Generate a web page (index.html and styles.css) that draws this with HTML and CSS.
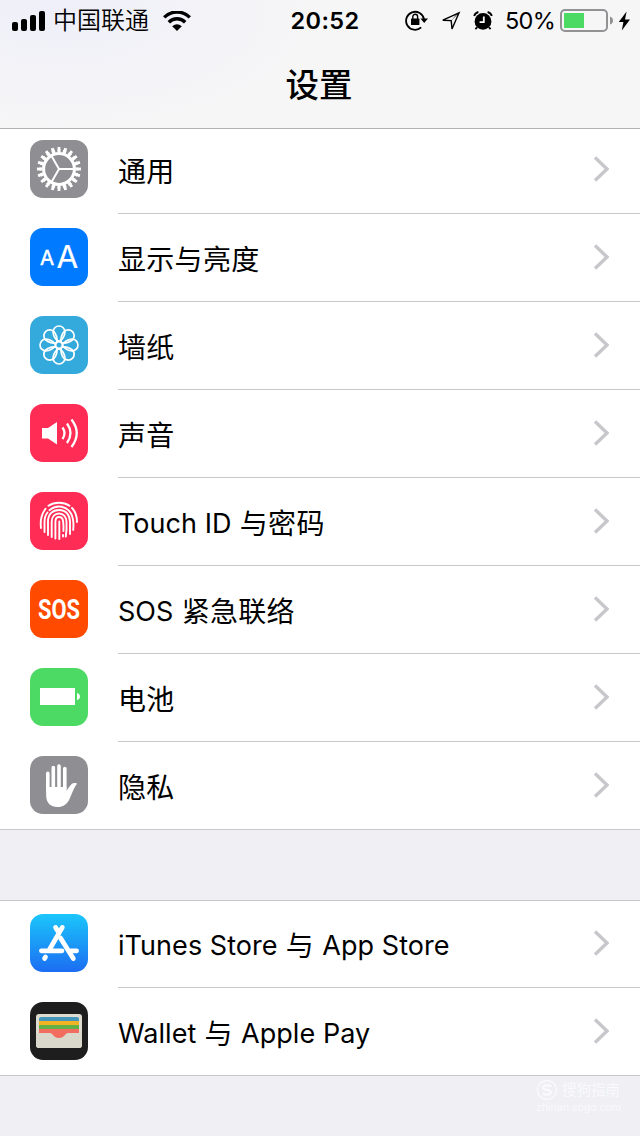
FILE: index.html
```html
<!DOCTYPE html>
<html lang="zh-CN">

<head>
    <meta charset="UTF-8">
    <title>设置</title>
    <link rel="stylesheet" href="styles.css">
</head>

<body>
    <header class="header">
        <div class="status-bar">
            <div class="status-left">
                <svg class="signal" width="34" height="20" viewBox="0 0 34 20">
                    <rect x="0" y="11" width="6" height="9" rx="2"/>
                    <rect x="9" y="8" width="6" height="12" rx="2"/>
                    <rect x="18" y="4" width="6" height="16" rx="2"/>
                    <rect x="27" y="0" width="6" height="20" rx="2"/>
                </svg>
                <span class="carrier">中国联通</span>
                <svg class="wifi" width="28" height="20" viewBox="0 0 28 20">
                    <path d="M1.2 6.4A18 18 0 0 1 26.8 6.4M5.8 11.2A11.6 11.6 0 0 1 22.2 11.2" fill="none" stroke="#000" stroke-width="3.4"/>
                    <path d="M9.2 15.2Q14 11.2 18.8 15.2L14 20Z"/>
                </svg>
            </div>
            <span class="time">20:52</span>
            <div class="status-right">
                <svg width="23" height="22" viewBox="0 0 23 22">
                    <path d="M16.2 17.4A9 9 0 1 1 19 9.4" fill="none" stroke="#000" stroke-width="1.8"/>
                    <path d="M15.4 8.6H23L19.2 13Z"/>
                    <rect x="6" y="8.6" width="8.4" height="6.4" rx="0.6"/>
                    <path d="M7.8 9.4V6.6a2.4 2.4 0 0 1 4.8 0V9.4" fill="none" stroke="#000" stroke-width="1.4"/>
                </svg>
                <svg class="location" width="20" height="20" viewBox="0 0 20 20">
                    <path d="M1.8 9.2L18 1.8L11 18L10.2 9.6Z" fill="none" stroke="#000" stroke-width="1.4"/>
                    <path d="M10 10L18 1.8L17 1.5Z"/>
                </svg>
                <svg class="alarm" width="20" height="20" viewBox="0 0 20 20">
                    <circle cx="10" cy="10.4" r="8.4"/>
                    <path d="M1.2 5Q2 1.8 5.4 1M14.6 1Q18 1.8 18.8 5M4 16.4L2.4 18.2M16 16.4L17.6 18.2" fill="none" stroke="#000" stroke-width="1.8"/>
                    <path d="M10.8 5.6V11.2H6.6" fill="none" stroke="#fff" stroke-width="1.8"/>
                </svg>
                <span class="percent">50%</span>
                <svg class="battery" width="53" height="23" viewBox="0 0 53 23">
                    <rect x="1" y="1" width="46" height="21" rx="4" fill="none" stroke="#929295" stroke-width="2"/>
                    <rect x="4" y="4" width="20" height="15" fill="#4cd964"/>
                    <path d="M50 7.5Q53 8.5 53 11.5T50 15.5Z" fill="#929295"/>
                </svg>
                <svg class="bolt" width="13" height="20" viewBox="0 0 13 20">
                    <path d="M8.6 0.5L0.8 11H5.4L3.8 19.5L12 8.6H7Z"/>
                </svg>
            </div>
        </div>
        <h1 class="title">设置</h1>
    </header>

    <ul class="group group-main">
        <li class="row">
            <svg class="icon" viewBox="0 0 58 58">
                <rect width="58" height="58" rx="13" fill="#8e8e93"/>
                <g fill="none" stroke="#fff">
                    <circle cx="29" cy="29" r="15.4" stroke-width="3"/>
                    <!-- teeth, wide at the root and narrow at the tip -->
                    <circle cx="29" cy="29" r="18" stroke-width="3.2" pathLength="200" stroke-dasharray="6 4" stroke-dashoffset="3"/>
                    <circle cx="29" cy="29" r="20.5" stroke-width="3" pathLength="200" stroke-dasharray="4.4 5.6" stroke-dashoffset="2.2"/>
                    <path d="M29 29H44M29 29L21.4 15.8M29 29L21.4 42.2" stroke-width="2"/>
                </g>
            </svg>
            <div class="cell">
                <span class="label">通用</span>
                <svg class="chevron" viewBox="0 0 16 26"><path d="M2 1.5L14 13L2 24.5"/></svg>
            </div>
        </li>
        <li class="row">
            <svg class="icon" viewBox="0 0 58 58">
                <rect width="58" height="58" rx="13" fill="#007aff"/>
                <text class="letter" x="10" y="37" font-size="20.5" stroke-width="0.5">A</text>
                <text class="letter" x="26.4" y="39.8" font-size="31.5" stroke-width="0.2">A</text>
            </svg>
            <div class="cell">
                <span class="label">显示与亮度</span>
                <svg class="chevron" viewBox="0 0 16 26"><path d="M2 1.5L14 13L2 24.5"/></svg>
            </div>
        </li>
        <li class="row">
            <svg class="icon" viewBox="0 0 58 58">
                <rect width="58" height="58" rx="13" fill="#34aadc"/>
                <g fill="none" stroke="#fff" stroke-width="1.7">
                    <circle cx="29" cy="29" r="3.4"/>
                    <path id="petal" d="M29 25.6C25.6 24 23.1 19.4 23.1 15.9A5.9 5.9 0 0 1 34.9 15.9C34.9 19.4 32.4 24 29 25.6Z"/>
                    <use href="#petal" transform="rotate(45 29 29)"/>
                    <use href="#petal" transform="rotate(90 29 29)"/>
                    <use href="#petal" transform="rotate(135 29 29)"/>
                    <use href="#petal" transform="rotate(180 29 29)"/>
                    <use href="#petal" transform="rotate(225 29 29)"/>
                    <use href="#petal" transform="rotate(270 29 29)"/>
                    <use href="#petal" transform="rotate(315 29 29)"/>
                </g>
            </svg>
            <div class="cell">
                <span class="label">墙纸</span>
                <svg class="chevron" viewBox="0 0 16 26"><path d="M2 1.5L14 13L2 24.5"/></svg>
            </div>
        </li>
        <li class="row">
            <svg class="icon" viewBox="0 0 58 58">
                <rect width="58" height="58" rx="13" fill="#ff2d55"/>
                <path d="M12 24H18L27 18V40.5L18 34.5H12Z" fill="#fff"/>
                <path d="M32.5 23.5Q36.5 29 32.5 35M37 19.5Q44 29 37 39M41.5 15.5Q52 29 41.5 43" fill="none" stroke="#fff" stroke-width="2.3"/>
            </svg>
            <div class="cell">
                <span class="label">声音</span>
                <svg class="chevron" viewBox="0 0 16 26"><path d="M2 1.5L14 13L2 24.5"/></svg>
            </div>
        </li>
        <li class="row">
            <svg class="icon" viewBox="0 0 58 58">
                <rect width="58" height="58" rx="13" fill="#ff2d55"/>
                <g fill="none" stroke="#fff" stroke-width="1.9" stroke-linecap="round">
                    <path d="M18.5 13.8Q23 10.8 29 10.8Q35 10.8 39.5 13.8M42 16Q47 21 47 30M11 36Q9.5 25 15.5 16.8"/>
                    <path d="M14.5 40V30C14.5 26 15.5 23 17.5 20.5M19.5 18.2C27 11.5 37 14.5 41 21.5C43.5 26 43.8 32 43.2 38"/>
                    <path d="M18 43V29.5C18 22 23 18 29 18C36 18 40 23 40 30V42"/>
                    <path d="M21.7 45V30C21.7 25 24.5 21.5 29 21.5C33.5 21.5 36.5 25 36.5 30C36.8 36 36.5 40 35.8 44.5"/>
                    <path d="M25.4 46.5V30C25.4 27 26.5 25 29 25C31.5 25 33 27 33.2 30C33.5 33 33.6 36 33.4 39M33 43V44.5"/>
                    <path d="M29.3 47V29.5"/>
                </g>
            </svg>
            <div class="cell">
                <span class="label"><span class="latin">Touch ID</span> 与密码</span>
                <svg class="chevron" viewBox="0 0 16 26"><path d="M2 1.5L14 13L2 24.5"/></svg>
            </div>
        </li>
        <li class="row">
            <svg class="icon" viewBox="0 0 58 58">
                <rect width="58" height="58" rx="13" fill="#ff4a00"/>
                <text class="sos" x="8" y="39" textLength="42" lengthAdjust="spacingAndGlyphs">SOS</text>
            </svg>
            <div class="cell">
                <span class="label"><span class="latin">SOS</span> 紧急联络</span>
                <svg class="chevron" viewBox="0 0 16 26"><path d="M2 1.5L14 13L2 24.5"/></svg>
            </div>
        </li>
        <li class="row">
            <svg class="icon" viewBox="0 0 58 58">
                <rect width="58" height="58" rx="13" fill="#4cd964"/>
                <rect x="10" y="20" width="35" height="17" fill="#fff"/>
                <path d="M47 25Q50 26 50 28.5T47 32Z" fill="#fff"/>
            </svg>
            <div class="cell">
                <span class="label">电池</span>
                <svg class="chevron" viewBox="0 0 16 26"><path d="M2 1.5L14 13L2 24.5"/></svg>
            </div>
        </li>
        <li class="row">
            <svg class="icon" viewBox="0 0 58 58">
                <rect width="58" height="58" rx="13" fill="#8e8e93"/>
                <path d="M17.8 32V17.4M23.3 32V11.6M29 32V10M34.8 32V12.6" stroke="#fff" stroke-width="3.6" stroke-linecap="round"/>
                <path d="M16 31H36.6V34.5C38.5 33 40 28.5 43 27.3C45 26.6 47 27 47 28C44 31 42 38 39.5 43C37 48.5 33 51 27.5 51C20.5 51 16.5 47 16.2 40Z" fill="#fff"/>
            </svg>
            <div class="cell">
                <span class="label">隐私</span>
                <svg class="chevron" viewBox="0 0 16 26"><path d="M2 1.5L14 13L2 24.5"/></svg>
            </div>
        </li>
    </ul>

    <ul class="group group-store">
        <li class="row">
            <svg class="icon" viewBox="0 0 58 58">
                <defs>
                    <linearGradient id="storeBlue" x1="0" y1="0" x2="0" y2="1">
                        <stop offset="0" stop-color="#1bc6fb"/>
                        <stop offset="1" stop-color="#1c6df2"/>
                    </linearGradient>
                </defs>
                <rect width="58" height="58" rx="13" fill="url(#storeBlue)"/>
                <g fill="none" stroke="#fff" stroke-width="4.8" stroke-linecap="round">
                    <path d="M11.4 36.8H32M41 36.8H46.6"/>
                    <path d="M32.3 13.4L19.5 35.5M15.5 43L14.6 44.4"/>
                    <path d="M25.6 13.4L27.4 16.4M30.5 24L43.3 44.6"/>
                </g>
            </svg>
            <div class="cell">
                <span class="label"><span class="latin">iTunes Store</span> 与 <span class="latin">App Store</span></span>
                <svg class="chevron" viewBox="0 0 16 26"><path d="M2 1.5L14 13L2 24.5"/></svg>
            </div>
        </li>
        <li class="row">
            <svg class="icon" viewBox="0 0 58 58">
                <rect width="58" height="58" rx="13" fill="#1e1e1e"/>
                <rect x="6" y="12" width="46" height="34" rx="3" fill="#dedbd0"/>
                <path d="M9 19V17Q9 15 11 15H47Q49 15 49 17V19Z" fill="#4596b8"/>
                <rect x="9" y="19" width="40" height="4" fill="#f0b323"/>
                <rect x="9" y="23" width="40" height="4" fill="#62b146"/>
                <rect x="9" y="27" width="40" height="4.5" fill="#f26d5f"/>
                <path d="M6 31H20C23 31 23 36 29 36C35 36 35 31 38 31H52V43Q52 46 49 46H9Q6 46 6 43Z" fill="#dad7cb"/>
                <path d="M20 30.8H38C35 31 35 36 29 36C23 36 23 31 20 30.8Z" fill="#f26d5f"/>
            </svg>
            <div class="cell">
                <span class="label"><span class="latin">Wallet</span> 与 <span class="latin">Apple Pay</span></span>
                <svg class="chevron" viewBox="0 0 16 26"><path d="M2 1.5L14 13L2 24.5"/></svg>
            </div>
        </li>
    </ul>

    <footer class="watermark">
        <div class="watermark-brand">
            <svg width="22" height="22" viewBox="0 0 22 22">
                <circle cx="11" cy="11" r="9.5" fill="none" stroke="#fafafc" stroke-width="1.4"/>
                <path d="M15.5 7.5Q11 5 7.5 7.2Q6 10 11 11Q16.5 12 14.5 14.5Q11 17 6.5 14.2" fill="none" stroke="#fafafc" stroke-width="2.4"/>
            </svg>
            <span>搜狗指南</span>
        </div>
        <div class="watermark-url">zhinan.sogo.com</div>
    </footer>
</body>

</html>
```

FILE: styles.css
```css
body {
    margin: 0;
    width: 640px;
    height: 1136px;
    overflow: hidden;
    background-color: #efeff4;
    color: #000;
    font-family: Inter, "Noto Sans CJK SC", sans-serif;
}

.header {
    position: relative;
    z-index: 1;
    height: 128px;
    border-bottom: 1px solid #b2b2b2;
    background: radial-gradient(ellipse 260px 120px at 60px 10px, #efeff9, rgba(246, 246, 247, 0)), #f6f6f7;
}

.status-bar {
    display: grid;
    grid-template-columns: 279px 92px 269px;
    align-items: center;
    height: 41px;
}

.status-left,
.status-right {
    display: flex;
    align-items: center;
}

.status-left {
    padding-left: 12px;
}

.carrier {
    margin-left: 7px;
    padding-top: 1px;
    font-size: 24px;
    font-weight: 350;
    line-height: 40px;
}

.wifi {
    margin-left: 14px;
}

.time {
    font-size: 23.5px;
    font-weight: 600;
    letter-spacing: 0.4px;
    text-align: center;
}

.status-right {
    padding-left: 34px;
}

.location {
    margin-left: 13px;
}

.alarm {
    margin-left: 12px;
}

.percent {
    width: 48px;
    margin-left: 12px;
    font-size: 23.5px;
    letter-spacing: -0.7px;
}

.battery {
    margin-left: 7px;
}

.bolt {
    margin-left: 5px;
}

.title {
    margin: 0;
    padding: 19px 2px 0 0;
    font-size: 33.5px;
    font-weight: 500;
    line-height: 50px;
    text-align: center;
}

.group {
    margin: 0;
    padding: 0;
    list-style: none;
    background-color: #fff;
    border-bottom: 1px solid #c8c7cc;
}

/* first row is scrolled slightly under the header */
.group-main {
    margin-top: -3px;
}

.group-store {
    margin-top: 70px;
    box-shadow: inset 0 1px 0 #c8c7cc;
}

.row {
    display: flex;
    height: 88px;
    padding-left: 30px;
}

.row:last-child {
    height: 87px;
}

.icon {
    flex: none;
    width: 58px;
    height: 58px;
    margin: 14px 30px 0 0;
    overflow: visible;
}

.cell {
    display: flex;
    flex: 1;
    align-items: center;
    justify-content: space-between;
    box-sizing: border-box;
    padding: 0 31px 1px 0;
    border-bottom: 1px solid #c8c7cc;
}

.row:last-child .cell {
    border-bottom: none;
}

.label {
    padding-top: 6px;
    font-size: 28px;
    letter-spacing: 0.3px;
    line-height: 40px;
    white-space: nowrap;
}

.latin {
    font-size: 27px;
    letter-spacing: 0.05px;
    line-height: 1;
    vertical-align: 1px;
}

.chevron {
    width: 16px;
    height: 26px;
}

.chevron path {
    fill: none;
    stroke: #c7c7cc;
    stroke-width: 3.4;
}

.letter {
    fill: #fff;
    stroke: #fff;
    font-family: Inter, sans-serif;
}

.sos {
    fill: #fff;
    font-family: Roboto, sans-serif;
    font-size: 28px;
    font-weight: 700;
}

.watermark {
    width: 90px;
    margin: 2px 0 0 536px;
    color: #fafafc;
}

.watermark-brand {
    display: flex;
    align-items: center;
    gap: 4px;
    font-size: 14.5px;
    line-height: 24px;
    white-space: nowrap;
}

.watermark-url {
    font-size: 10.5px;
    line-height: 12px;
}
```
